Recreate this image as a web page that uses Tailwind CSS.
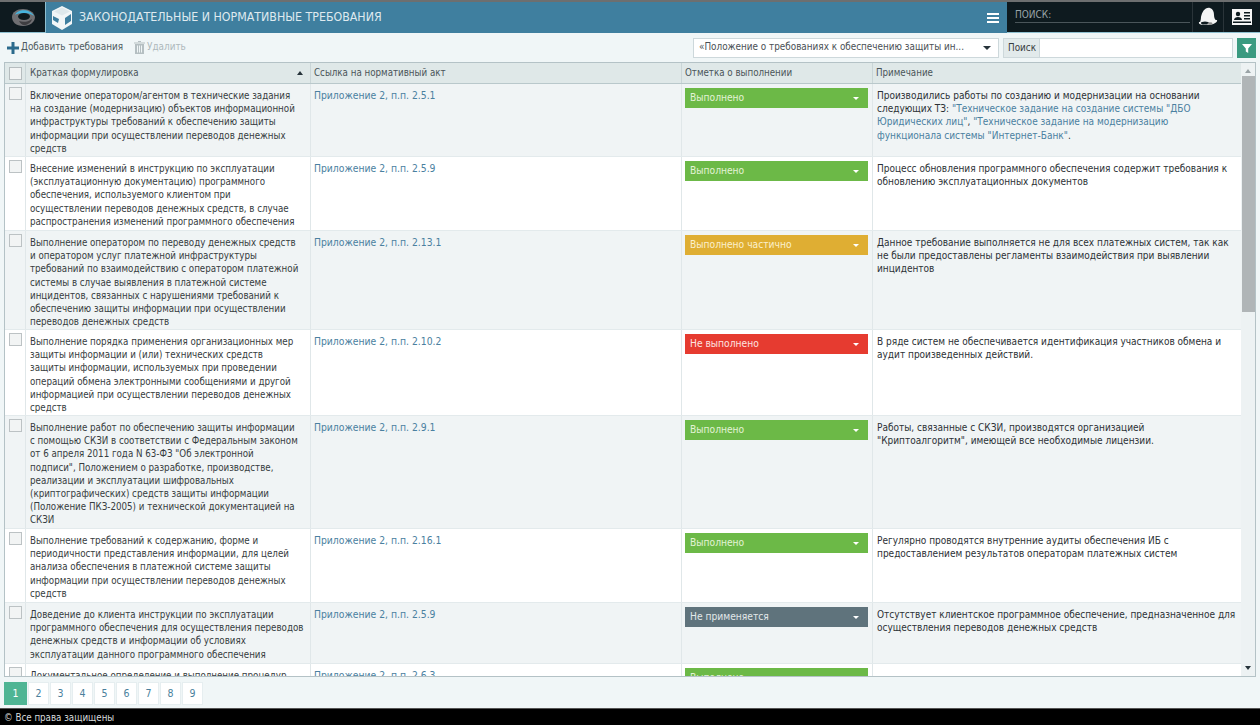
<!DOCTYPE html>
<html lang="ru">
<head>
    <meta charset="UTF-8">
    <title>Законодательные и нормативные требования</title>
    <script src="https://cdn.jsdelivr.net/npm/@tailwindcss/browser@4"></script>
</head>
<body class="w-[1260px] h-[725px] overflow-hidden bg-[#f0f6f7] font-['DejaVu_Sans_Condensed','DejaVu_Sans',sans-serif] [font-stretch:condensed] text-[9.7px] text-[#363c40]">
<div class="flex flex-col h-[725px]">

    <header class="flex h-[33px] shrink-0 bg-[#3f7f9f] border-t-2 border-[#6d6f70]">
        <div class="w-[46px] bg-[#0e1a1f] border-b border-r border-[#8fc0d0] flex items-center justify-center">
            <svg width="26" height="22" viewBox="0 0 26 22">
                <path d="M2 11C2 6 7 3 13 3c6 0 11 3 12 8 0 5-5 9-12 9S2 16 2 11z" fill="#6f6f72"/>
                <path d="M5 9C7 3 20 2 24 10c-3-2-5-2.500-7-2.500h-7C8 7.500 6 8 5 9z" fill="#45b4de"/>
                <ellipse cx="14" cy="10.500" rx="6" ry="3.500" fill="#0e1a1f"/>
                <path d="M9 15c4 1.500 9 1 13-2-1 4-5 6-8 6-2 0-4-2-5-4z" fill="#3e3e41"/>
            </svg>
        </div>
        <div class="flex-1 flex items-center pl-[5px]">
            <svg width="22" height="24" viewBox="0 0 22 24">
                <path d="M11 0l10 5v13l-10 6-10-6V5z" fill="#f2f6f7"/>
                <path d="M2 10l6 3-1 4-5-3zM20 8v7l-6 4v-7z" fill="#3f7f9f"/>
                <path d="M11 1.500l8 4-8 4-8-4z" fill="#dfe9ec"/>
            </svg>
            <span class="ml-[6px] text-[12.3px] text-[#dfeaef]">ЗАКОНОДАТЕЛЬНЫЕ И НОРМАТИВНЫЕ ТРЕБОВАНИЯ</span>
            <div class="ml-auto mr-[8px] flex flex-col gap-[2px]">
                <span class="block w-[12px] h-[2px] bg-white"></span>
                <span class="block w-[12px] h-[2px] bg-white"></span>
                <span class="block w-[12px] h-[2px] bg-white"></span>
            </div>
        </div>
        <div class="w-[253px] bg-[#0e1a1f] border-b border-[#8fc0d0] flex">
            <div class="w-[185px] pl-[8px] pt-[6px]">
                <div class="w-[175px] h-[15px] border-b border-[#4a555a] text-[10px] text-[#9aa5a9] leading-[13px]">ПОИСК:</div>
            </div>
            <div class="w-[31px] border-l border-[#2a3439] flex items-center justify-center">
                <svg width="20" height="20" viewBox="0 0 20 20">
                    <path d="M12 1c3 1 4 4 4 7s1 5 3 6L2 16c0-1 1-3 1-6 1-5 4-10 9-9z" fill="#f4f4f4"/>
                    <path d="M1 15l18-2c1 2-4 5-9 5s-10 0-9-3z" fill="#f4f4f4"/>
                    <ellipse cx="7" cy="16" rx="4" ry="1.500" fill="#0e1a1f"/>
                    <ellipse cx="12" cy="16.500" rx="2.500" ry="1.200" fill="#8d8d8d"/>
                </svg>
            </div>
            <div class="flex-1 border-l border-[#2a3439] flex items-center justify-center">
                <svg width="20" height="16" viewBox="0 0 20 16">
                    <rect width="20" height="16" fill="#f6f6f6"/>
                    <circle cx="6" cy="5" r="2.200" fill="#0e1a1f"/>
                    <path d="M2 11c0-2 2-3 4-3s4 1 4 3z" fill="#0e1a1f"/>
                    <path d="M12 3h6v1.500h-6zM12 6h6v1.500h-6zM12 9h6v1.500h-6zM1 12.500h18V14H1z" fill="#0e1a1f"/>
                </svg>
            </div>
        </div>
    </header>

    <div class="flex items-center h-[29px] shrink-0 pl-[7px] pr-[4px] text-[9.85px]">
        <svg width="12" height="12" viewBox="0 0 12 12" class="mr-[2px]"><path d="M4.500 0h3v4.500H12v3H7.500V12h-3V7.500H0v-3h4.500z" fill="#2b6a8c"/></svg>
        <span class="text-[#4e5a60]">Добавить требования</span>
        <svg width="11" height="13" viewBox="0 0 11 13" class="ml-[11px] mr-[2px]"><path d="M0 1.500h11v1H0zM1 3h9v10H1zM3 4.500v7h1v-7zM5 4.500v7h1v-7zM7 4.500v7h1v-7zM4 0h3v1H4z" fill="#b5bfc2" fill-rule="evenodd"/></svg>
        <span class="text-[#aeb9bc]">Удалить</span>
        <div class="ml-auto w-[306px] h-[20px] bg-white border border-[#cdd8db] flex items-center pl-[5px] pr-[7px] text-[#4a5055]">
            <span class="whitespace-nowrap">«Положение о требованиях к обеспечению защиты ин...</span>
            <span class="ml-auto w-0 h-0 border-x-[4px] border-x-transparent border-t-[4px] border-t-[#26333a]"></span>
        </div>
        <div class="ml-[4px] w-[230px] h-[20px] bg-white border border-[#cdd8db] flex">
            <span class="w-[36px] bg-[#e2eaeb] border-r border-[#cdd8db] pl-[4px] leading-[18px]">Поиск</span>
        </div>
        <div class="ml-[4px] w-[19px] h-[20px] bg-[#3a9a80] flex items-center justify-center">
            <svg width="10" height="10" viewBox="0 0 10 10"><path d="M0 1h10L6.200 5.500V10L3.800 8.500v-3z" fill="#fff"/></svg>
        </div>
    </div>

    <div class="relative h-[615px] shrink-0 mx-[4px] border border-[#b4c2c6] bg-white overflow-hidden">
        <div class="flex h-[21px] bg-[#dfe8e8] border-b border-[#b9c8cb] text-[#4a5459] leading-[20px]">
            <div class="w-[21px] shrink-0 border-r border-[#c9d5d7] flex items-center justify-center"><span class="block w-[13px] h-[13px] bg-[#f2f4f4] border border-[#b5bcbe]"></span></div>
            <div class="w-[285px] shrink-0 border-r border-[#c9d5d7] pl-[4px] pr-[7px] flex items-center"><span>Краткая формулировка</span><span class="ml-auto w-0 h-0 border-x-[3px] border-x-transparent border-b-[4px] border-b-[#26333a]"></span></div>
            <div class="w-[371px] shrink-0 border-r border-[#c9d5d7] pl-[3px]">Ссылка на нормативный акт</div>
            <div class="w-[191px] shrink-0 border-r border-[#c9d5d7] pl-[3px]">Отметка о выполнении</div>
            <div class="flex-1 pl-[3px]">Примечание</div>
        </div>
        <div id="rows"></div>
        <div class="absolute right-0 top-0 bottom-0 w-[14px] bg-[#edf2f3] flex flex-col items-center">
            <span class="mt-[6px] w-0 h-0 border-x-[3px] border-x-transparent border-b-[4px] border-b-[#9aa3a6]"></span>
            <span class="mt-[3px] w-[13px] h-[236px] bg-[#b0b5b7]"></span>
            <span class="mt-auto mb-[6px] w-0 h-0 border-x-[3px] border-x-transparent border-t-[4px] border-t-[#26333a]"></span>
        </div>
    </div>

    <div class="flex h-[31px] shrink-0 pl-[4px] pt-[5px] gap-[1px] text-[10.5px]">
        <span class="w-[23px] h-[23px] bg-[#4fb594] text-white flex items-center justify-center">1</span>
        <span class="w-[21px] h-[23px] bg-white border border-[#e6eef0] text-[#4a7f9c] flex items-center justify-center">2</span>
        <span class="w-[21px] h-[23px] bg-white border border-[#e6eef0] text-[#4a7f9c] flex items-center justify-center">3</span>
        <span class="w-[21px] h-[23px] bg-white border border-[#e6eef0] text-[#4a7f9c] flex items-center justify-center">4</span>
        <span class="w-[21px] h-[23px] bg-white border border-[#e6eef0] text-[#4a7f9c] flex items-center justify-center">5</span>
        <span class="w-[21px] h-[23px] bg-white border border-[#e6eef0] text-[#4a7f9c] flex items-center justify-center">6</span>
        <span class="w-[21px] h-[23px] bg-white border border-[#e6eef0] text-[#4a7f9c] flex items-center justify-center">7</span>
        <span class="w-[21px] h-[23px] bg-white border border-[#e6eef0] text-[#4a7f9c] flex items-center justify-center">8</span>
        <span class="w-[21px] h-[23px] bg-white border border-[#e6eef0] text-[#4a7f9c] flex items-center justify-center">9</span>
    </div>

    <footer class="flex-1 bg-black border-t border-[#555] text-[#d8dcdd] pl-[4px] leading-[17px]">© Все права защищены</footer>
</div>

<script>
    const statuses = {
        done: { text: 'Выполнено', cls: 'bg-[#6cb947] text-[#e3f3d6]' },
        part: { text: 'Выполнено частично', cls: 'bg-[#dfae33] text-[#fbf0cd]' },
        fail: { text: 'Не выполнено', cls: 'bg-[#e63b30] text-[#fde3e0]' },
        na: { text: 'Не применяется', cls: 'bg-[#5f737c] text-[#e2e8ea]' }
    };

    const link = 'text-[#4a80a0]';

    const requirements = [
        { h: 73, ref: '2.5.1', st: 'done',
          text: ['Включение оператором/агентом в технические задания', 'на создание (модернизацию) объектов информационной', 'инфраструктуры требований к обеспечению защиты', 'информации при осуществлении переводов денежных', 'средств'],
          note: `Производились работы по созданию и модернизации на основании<br>следующих ТЗ: <span class="${link}">"Техническое задание на создание системы "ДБО<br>Юридических лиц"</span>, <span class="${link}">"Техническое задание на модернизацию<br>функционала системы "Интернет-Банк"</span>.` },
        { h: 74, ref: '2.5.9', st: 'done',
          text: ['Внесение изменений в инструкцию по эксплуатации', '(эксплуатационную документацию) программного', 'обеспечения, используемого клиентом при', 'осуществлении переводов денежных средств, в случае', 'распространения изменений программного обеспечения'],
          note: 'Процесс обновления программного обеспечения содержит требования к<br>обновлению эксплуатационных документов' },
        { h: 99, ref: '2.13.1', st: 'part',
          text: ['Выполнение оператором по переводу денежных средств', 'и оператором услуг платежной инфраструктуры', 'требований по взаимодействию с оператором платежной', 'системы в случае выявления в платежной системе', 'инцидентов, связанных с нарушениями требований к', 'обеспечению защиты информации при осуществлении', 'переводов денежных средств'],
          note: 'Данное требование выполняется не для всех платежных систем, так как<br>не были предоставлены регламенты взаимодействия при выявлении<br>инцидентов' },
        { h: 86, ref: '2.10.2', st: 'fail',
          text: ['Выполнение порядка применения организационных мер', 'защиты информации и (или) технических средств', 'защиты информации, используемых при проведении', 'операций обмена электронными сообщениями и другой', 'информацией при осуществлении переводов денежных', 'средств'],
          note: 'В ряде систем не обеспечивается идентификация участников обмена и<br>аудит произведенных действий.' },
        { h: 113, ref: '2.9.1', st: 'done',
          text: ['Выполнение работ по обеспечению защиты информации', 'с помощью СКЗИ в соответствии с Федеральным законом', 'от 6 апреля 2011 года N 63-ФЗ "Об электронной', 'подписи", Положением о разработке, производстве,', 'реализации и эксплуатации шифровальных', '(криптографических) средств защиты информации', '(Положение ПКЗ-2005) и технической документацией на', 'СКЗИ'],
          note: 'Работы, связанные с СКЗИ, производятся организацией<br>"Криптоалгоритм", имеющей все необходимые лицензии.' },
        { h: 74, ref: '2.16.1', st: 'done',
          text: ['Выполнение требований к содержанию, форме и', 'периодичности представления информации, для целей', 'анализа обеспечения в платежной системе защиты', 'информации при осуществлении переводов денежных', 'средств'],
          note: 'Регулярно проводятся внутренние аудиты обеспечения ИБ с<br>предоставлением результатов операторам платежных систем' },
        { h: 61, ref: '2.5.9', st: 'na',
          text: ['Доведение до клиента инструкции по эксплуатации', 'программного обеспечения для осуществления переводов', 'денежных средств и информации об условиях', 'эксплуатации данного программного обеспечения'],
          note: 'Отсутствует клиентское программное обеспечение, предназначенное для<br>осуществления переводов денежных средств' },
        { h: 40, ref: '2.6.3', st: 'done',
          text: ['Документальное определение и выполнение процедур'],
          note: '' }
    ];

    document.getElementById('rows').innerHTML = requirements.map((r, i) => {
        const s = statuses[r.st];
        const rowBg = i % 2 === 0 ? 'bg-[#f0f4f5]' : 'bg-white';
        return `
        <div class="flex ${rowBg} border-b border-[#e3eaec] leading-[13.2px]" style="height:${r.h}px">
            <div class="w-[21px] shrink-0 border-r border-[#e0e7e9] flex justify-center pt-[3px]"><span class="block w-[13px] h-[13px] bg-[#f2f4f4] border border-[#bcc2c4]"></span></div>
            <div class="w-[285px] shrink-0 border-r border-[#e0e7e9] pl-[4px] pt-[5px] whitespace-nowrap">${r.text.join('<br>')}</div>
            <div class="w-[371px] shrink-0 border-r border-[#e0e7e9] pl-[3px] pt-[5px] text-[10.3px] ${link}">Приложение 2, п.п. ${r.ref}</div>
            <div class="w-[191px] shrink-0 border-r border-[#e0e7e9] pl-[3px] pr-[4px] pt-[4px]">
                <div class="flex items-center h-[20px] pl-[5px] pr-[9px] text-[10.2px] ${s.cls}"><span>${s.text}</span><span class="ml-auto w-0 h-0 border-x-[3px] border-x-transparent border-t-[3px] border-t-white"></span></div>
            </div>
            <div class="flex-1 pl-[4px] pt-[5px] whitespace-nowrap text-[10px] text-[#2c3135]">${r.note}</div>
        </div>`;
    }).join('');
</script>
</body>
</html>
